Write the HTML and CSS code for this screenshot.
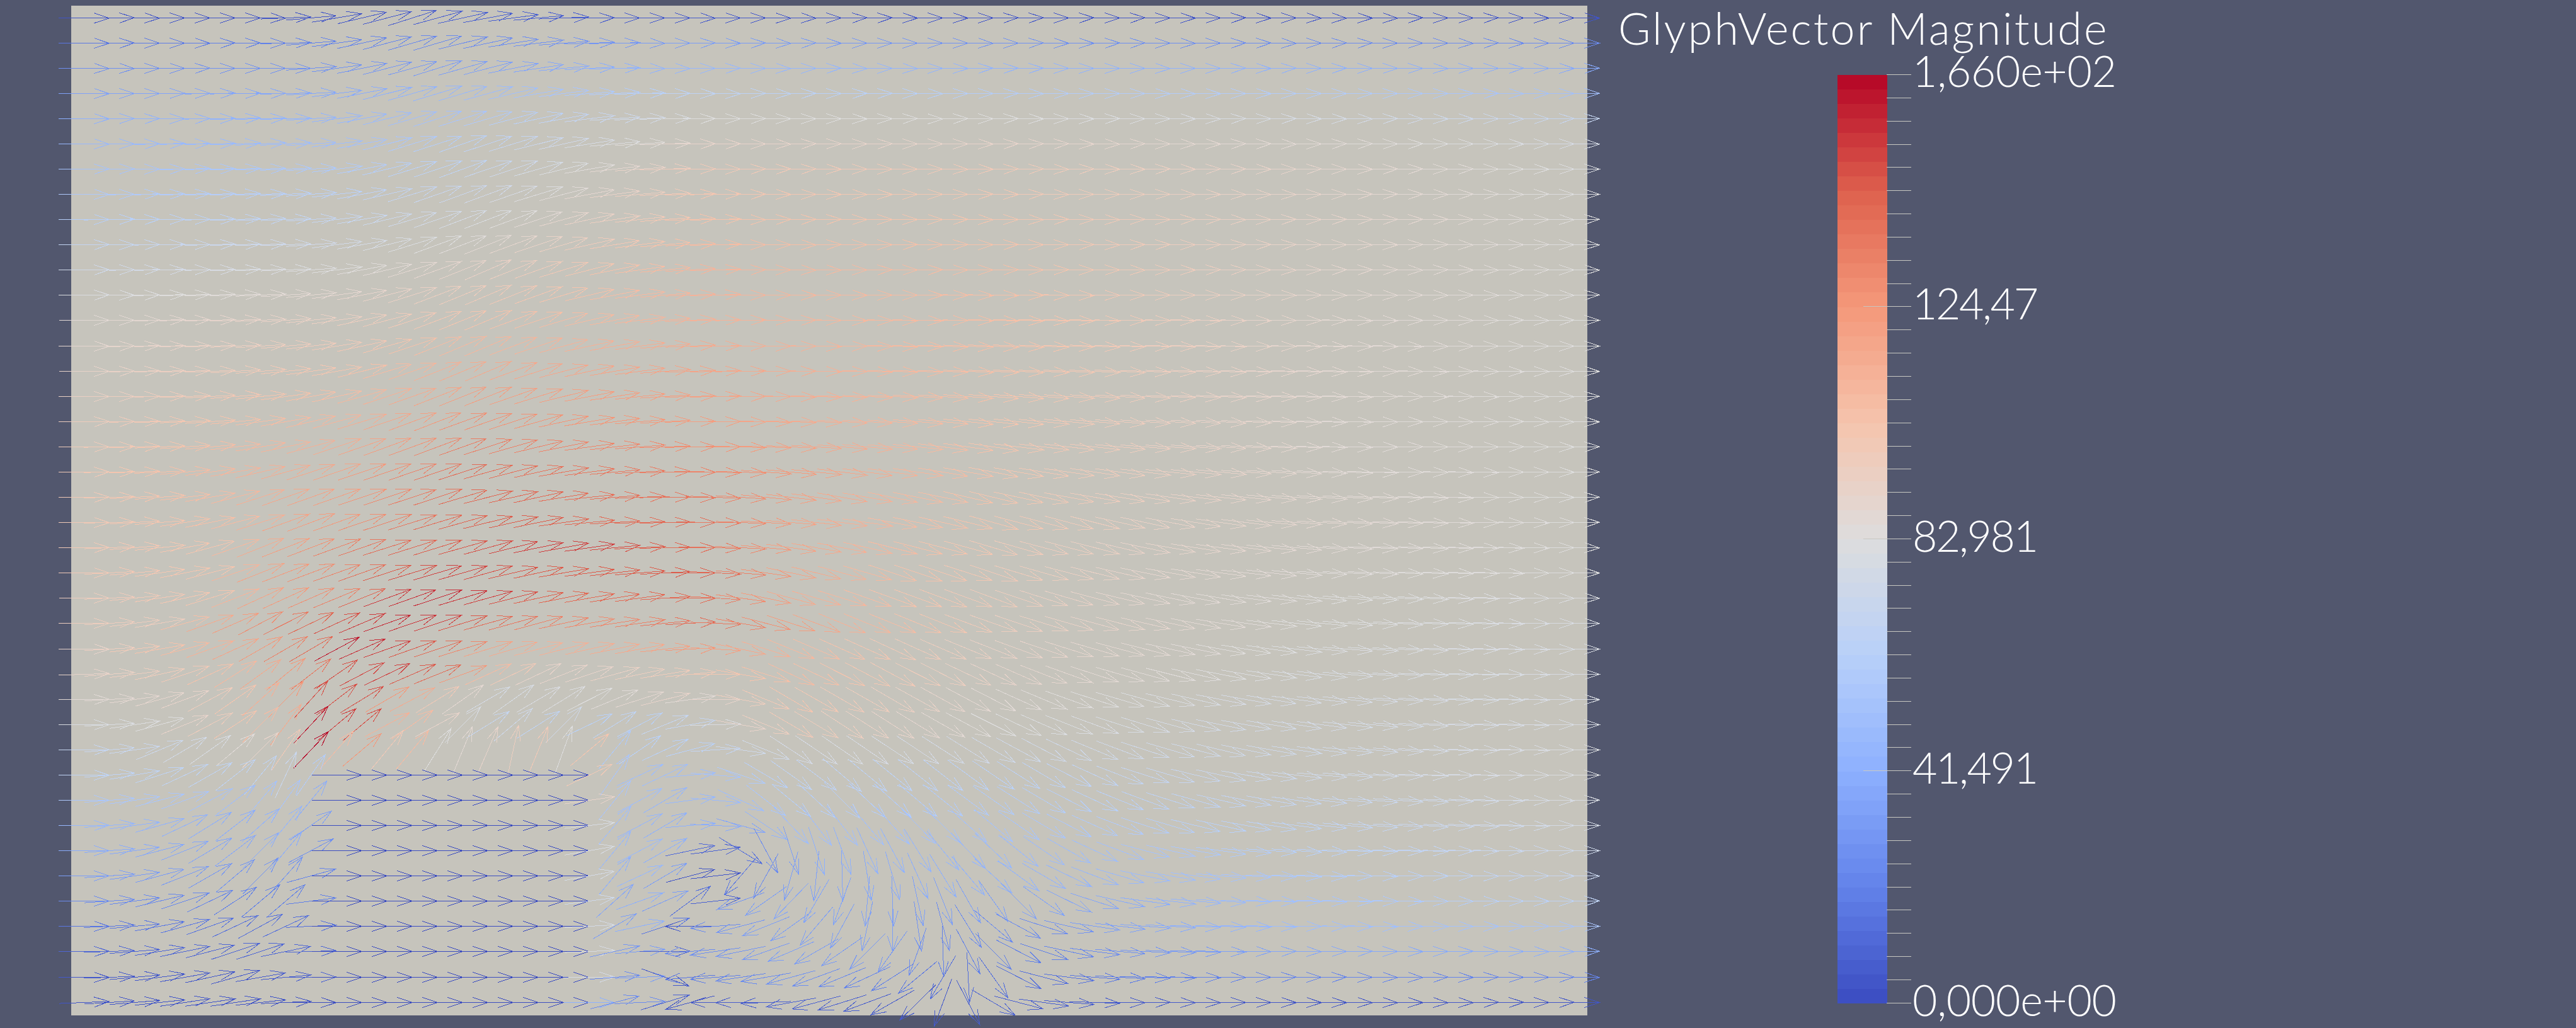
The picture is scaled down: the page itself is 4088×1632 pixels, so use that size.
FILE: index.html
```html
<!DOCTYPE html>
<html lang="en">
<head>
<meta charset="utf-8">
<title>GlyphVector Magnitude</title>
<link rel="stylesheet" href="styles.css">
</head>
<body>
<main class="view">
  <section class="plot"><svg id="glyphs" class="glyphs" width="2406" height="1603" viewBox="0 0 2406 1603"></svg></section>
  <aside class="legend">
    <h1 class="legend-title">GlyphVector Magnitude</h1>
    <div class="scale">
      <div id="bar" class="bar"></div>
      <div id="ticks" class="ticks"></div>
      <div class="labels">
        <span class="label label-long">1,660e+02</span>
        <span class="label label-short">124,47</span>
        <span class="label label-short">82,981</span>
        <span class="label label-short">41,491</span>
        <span class="label label-long">0,000e+00</span>
      </div>
    </div>
  </aside>
</main>
<script src="script.js"></script>
</body>
</html>
```
FILE: styles.css
```css
html, body { margin: 0; padding: 0; }
body { width: 4088px; height: 1632px; overflow: hidden; background: #52576e; }
.view { display: flex; align-items: flex-start; padding: 9px 0 0 113px; }
.plot { flex: none; width: 2406px; height: 1603px; background: #c6c4bc; }
.glyphs { display: block; overflow: visible; shape-rendering: crispEdges; }
.glyphs path { fill: none; stroke-width: 1; }
.legend { flex: none; margin-left: 49px; margin-top: -9px; display: flex; flex-direction: column; font-family: "Lato", sans-serif; font-weight: 300; color: #fff; }
.legend-title { margin: 0; padding-top: 9px; height: 70px; font-size: 70px; line-height: 70px; letter-spacing: 3.1px; font-weight: 300; white-space: nowrap; }
.scale { display: flex; margin-left: 348px; margin-top: 39px; height: 1475px; }
.bar { flex: none; width: 79px; height: 1474px; margin-top: 1px; display: flex; flex-direction: column; }
.band { flex: 1 1 0; }
.ticks { flex: none; width: 39px; height: 1475px; margin-left: -1px; display: flex; flex-direction: column; justify-content: space-between; align-items: flex-end; }
.tick { width: 39px; height: 1px; background: #c8c8c2; }
.tick-major { width: 76px; }
.labels { flex: none; margin-left: 2px; margin-top: -31px; height: 1525px; display: flex; flex-direction: column; justify-content: space-between; }
.label { display: block; font-size: 68px; line-height: 50px; white-space: nowrap; }
.label-long { letter-spacing: -0.3px; }
.label-short { letter-spacing: -2.4px; }
```
FILE: script.js
```js
var STOPS = [[0,59,76,192],[.125,98,130,234],[.25,141,176,254],[.375,184,208,249],[.5,221,221,221],[.625,245,196,173],[.75,244,152,122],[.875,222,96,77],[1,180,4,38]];
function color(m) {
  m = Math.max(0, Math.min(1, m));
  for (var k = 1; k < STOPS.length; k++) {
    if (m <= STOPS[k][0]) {
      var a = STOPS[k - 1], b = STOPS[k], t = (m - a[0]) / (b[0] - a[0]);
      return "rgb(" + Math.round(a[1] + (b[1] - a[1]) * t) + "," + Math.round(a[2] + (b[2] - a[2]) * t) + "," + Math.round(a[3] + (b[3] - a[3]) * t) + ")";
    }
  }
  return "rgb(180,4,38)";
}

/* Flow direction (degrees, up is positive): row -> "column:angle ..." */
var ANGLE = {
  0: "0:0 7:0 9:5 11:13 13:17 14:15 16:10 18:5 20:0 59:0",
  2: "0:0 8:0 10:8 12:14 14:17 16:14 18:8 20:3 22:0 59:0",
  5: "0:0 9:3 11:10 13:17 15:19 17:17 19:12 21:5 24:0 59:0",
  10: "0:0 8:2 10:7 12:13 14:20 16:23 18:20 20:14 22:8 24:3 26:0 59:0",
  14: "0:0 5:2 8:6 10:10 12:17 14:22 16:23 18:18 20:12 22:7 24:2 28:0 36:-3 59:0",
  17: "0:0 3:2 6:6 8:12 10:18 12:20 14:20 16:18 18:14 20:8 22:4 24:1 28:-3 36:-8 44:-4 52:0 59:0",
  19: "0:0 3:4 5:10 7:18 9:20 12:18 14:18 16:14 18:12 20:6 22:2 24:-1 30:-10 36:-13 44:-7 52:-2 59:0",
  20: "0:0 3:5 6:15 8:20 10:20 12:18 14:17 16:14 18:12 20:5 22:2 24:0 28:-5 32:-10 36:-15 40:-14 45:-8 49:-3 59:0",
  21: "0:0 3:6 5:15 7:22 10:20 12:18 14:17 16:15 18:12 20:8 22:3 24:0 26:-3 28:-8 32:-14 36:-16 40:-14 45:-8 50:-3 59:0",
  22: "0:0 3:8 5:15 7:22 10:20 12:18 14:17 16:15 18:12 20:8 22:5 24:0 26:-5 28:-12 32:-18 36:-18 40:-14 45:-8 50:-3 59:0",
  23: "0:0 3:8 5:17 7:25 10:23 12:20 14:18 16:16 18:12 20:10 22:8 24:0 26:-8 28:-15 32:-20 36:-20 40:-15 46:-8 52:-3 59:0",
  24: "0:0 3:10 5:20 7:28 10:25 12:20 14:18 16:15 18:15 20:10 22:8 24:3 25:-2 26:-10 28:-18 30:-22 34:-22 40:-15 46:-8 52:-3 59:0",
  25: "0:0 3:10 5:20 7:30 9:30 10:28 12:20 14:18 16:17 18:15 20:13 22:10 24:3 25:-3 26:-12 28:-22 32:-25 36:-22 40:-16 46:-9 52:-3 59:0",
  26: "0:2 2:7 4:18 6:32 8:40 10:35 11:28 12:25 14:22 15:20 16:25 18:25 20:18 22:12 24:5 25:0 26:-10 28:-25 32:-28 36:-25 40:-18 46:-10 52:-3 59:0",
  27: "0:0 1:3 2:8 3:15 4:20 5:28 6:35 7:42 8:45 9:48 10:38 11:32 12:30 13:28 14:32 15:35 16:30 17:35 18:30 19:32 20:27 21:22 22:18 23:14 24:8 25:0 26:-10 27:-22 28:-30 32:-30 36:-27 40:-18 46:-10 52:-4 59:0",
  28: "0:0 1:3 2:8 3:15 4:22 5:28 6:33 7:45 8:53 9:47 10:40 11:40 12:28 13:35 14:28 15:45 16:32 17:40 18:32 19:45 20:25 21:32 22:28 23:22 24:10 25:2 26:-10 27:-22 28:-30 30:-33 32:-32 36:-27 40:-20 46:-10 52:-4 59:0",
  29: "0:0 1:5 2:8 3:22 4:30 5:35 6:40 7:45 8:55 9:47 10:48 11:40 12:50 13:50 14:58 15:68 16:67 17:78 18:68 19:70 20:40 21:50 22:35 23:25 24:15 25:3 26:-8 27:-22 28:-33 30:-35 34:-33 38:-27 42:-18 48:-8 54:-2 59:0",
  30: "0:0 1:5 2:10 3:18 4:25 5:30 6:38 7:50 8:65 9:55 20:25 21:55 22:25 23:25 24:5 25:-5 26:-18 27:-30 28:-35 29:-37 30:-40 34:-38 38:-30 42:-18 46:-10 49:-5 54:-1 59:0",
  31: "0:0 2:8 4:20 5:28 6:38 7:50 8:55 9:50 20:8 21:50 22:28 23:30 24:8 25:-5 26:-25 27:-38 28:-40 29:-43 30:-45 36:-35 42:-20 46:-11 50:-5 59:0",
  32: "0:0 2:8 3:15 4:25 6:38 7:42 8:50 9:35 20:7 21:50 22:28 23:30 24:5 25:-3 26:-16 27:-34 28:-47 29:-52 30:-52 36:-40 38:-30 42:-18 46:-10 50:-5 59:0",
  33: "0:0 2:8 4:22 5:30 6:37 7:45 8:50 9:28 20:10 21:50 22:28 23:30 24:12 25:8 26:-31 27:-62 28:-72 29:-72 30:-70 31:-65 32:-62 33:-58 34:-50 36:-43 38:-35 42:-15 46:-5 50:-2 59:0",
  34: "0:0 2:8 4:22 5:30 6:40 7:45 8:48 9:15 20:10 21:50 22:25 23:30 24:15 25:7 26:-131 27:-119 28:-106 29:-96 30:-88 31:-81 32:-74 33:-66 34:-58 35:-50 36:-42 38:-30 42:-12 46:-3 50:-1 59:0",
  35: "0:0 2:8 4:18 6:33 7:40 8:40 9:7 20:8 21:42 22:20 23:24 24:36 25:6 26:-160 27:-145 28:-134 29:-120 30:-110 31:-95 32:-88 33:-78 34:-68 35:-60 36:-55 38:-35 40:-18 42:-8 46:-2 59:0",
  36: "0:0 2:5 4:15 6:25 7:28 8:25 9:3 20:3 21:30 22:12 23:18 24:-180 25:-175 26:-165 27:-158 28:-145 29:-130 30:-118 31:-102 32:-90 33:-82 34:-75 35:-58 36:-40 37:-28 38:-18 40:-9 42:-4 46:-1 59:0",
  37: "0:0 2:5 4:12 6:18 7:18 8:12 9:2 20:2 21:12 22:5 23:0 24:-175 25:-172 26:-168 27:-160 28:-157 29:-150 30:-145 31:-135 32:-125 33:-110 34:-88 35:-62 36:-45 37:-27 38:-18 39:-12 40:-7 42:-3 46:0 59:0",
  38: "0:0 2:5 4:10 6:15 7:10 8:5 9:1 20:1 21:5 22:3 23:-20 24:-175 25:-175 26:-172 27:-170 28:-165 29:-160 30:-158 31:-155 32:-147 33:-140 34:-120 35:-87 36:-55 37:-27 38:-15 39:-8 40:-5 42:-2 46:0 59:0",
  39: "0:2 2:5 4:8 6:8 7:6 8:3 9:0 20:0 21:15 22:3 23:17 24:-165 25:-180 26:-180 27:-178 28:-170 29:-165 30:-163 31:-160 32:-150 33:-135 34:-110 35:-62 36:-30 37:-15 38:-8 39:-5 40:-2 42:0 59:0"
};

/* Normalised magnitude: row -> "column:value ..." */
function topRow(a) {
  var k = [0, 10, 15, 24, 36, 49, 59];
  return k.map(function (c, n) { return c + ":" + a[n]; }).join(" ");
}
var MAG = {
  0: topRow([.02,.02,.05,.03,.02,.02,.02]),
  1: topRow([.1,.13,.15,.2,.17,.15,.15]),
  2: topRow([.16,.17,.2,.28,.26,.25,.23]),
  3: topRow([.21,.23,.28,.4,.36,.36,.31]),
  4: topRow([.25,.27,.33,.5,.5,.47,.42]),
  5: topRow([.28,.3,.38,.55,.55,.52,.47]),
  6: topRow([.32,.35,.4,.6,.6,.54,.49]),
  8: topRow([.37,.42,.47,.63,.62,.55,.5]),
  10: topRow([.45,.5,.55,.67,.64,.54,.5]),
  12: topRow([.52,.57,.62,.68,.64,.53,.5]),
  14: topRow([.55,.62,.7,.72,.63,.53,.5]),
  16: topRow([.58,.67,.77,.74,.62,.52,.5]),
  18: topRow([.6,.72,.85,.8,.62,.52,.5]),
  20: "0:.6 3:.62 6:.65 8:.72 10:.75 12:.8 14:.85 16:.88 18:.88 20:.85 24:.85 28:.72 32:.65 36:.62 42:.56 49:.53 59:.5",
  21: "0:.6 5:.62 7:.7 10:.8 12:.85 14:.88 16:.9 18:.92 20:.92 22:.88 24:.85 28:.72 32:.65 36:.6 42:.55 49:.52 59:.5",
  22: "0:.6 5:.62 7:.72 10:.8 12:.88 14:.92 16:.9 18:.88 20:.88 22:.88 24:.88 28:.72 32:.64 36:.6 42:.54 49:.51 59:.5",
  23: "0:.58 5:.62 7:.72 10:.8 12:.93 14:.95 16:.92 18:.87 20:.85 24:.85 28:.7 32:.63 36:.59 42:.53 49:.5 59:.49",
  24: "0:.58 3:.58 5:.7 7:.78 10:.9 12:.95 14:.92 16:.85 18:.8 20:.78 22:.8 24:.85 30:.68 36:.58 48:.5 59:.48",
  25: "0:.55 5:.68 7:.75 9:.85 10:.97 12:.92 14:.85 16:.72 18:.68 22:.7 24:.75 28:.66 32:.6 36:.56 48:.49 59:.48",
  26: "0:.55 4:.6 6:.66 8:.75 10:.9 12:.92 14:.85 15:.75 16:.65 18:.55 20:.55 24:.6 28:.65 32:.6 36:.55 48:.48 59:.48",
  27: "0:.52 4:.55 6:.62 8:.75 9:.9 10:.9 11:.9 12:.75 13:.7 14:.6 15:.53 16:.47 20:.5 23:.55 24:.52 26:.58 28:.62 32:.57 36:.52 46:.47 59:.48",
  28: "0:.48 3:.5 4:.55 6:.62 7:.65 8:.7 9:.98 10:.92 11:.9 12:.68 13:.65 14:.55 15:.48 16:.42 17:.45 18:.4 19:.45 20:.38 21:.4 22:.38 23:.42 24:.42 26:.55 28:.6 32:.55 36:.5 45:.46 59:.48",
  29: "0:.42 3:.44 5:.48 7:.55 8:.6 9:1 10:.65 11:.75 12:.6 13:.65 14:.5 18:.6 19:.5 20:.62 21:.35 22:.38 23:.38 24:.38 26:.45 30:.48 36:.45 48:.45 59:.49",
  30: "0:.4 4:.4 7:.4 8:.43 9:.36 20:.6 21:.33 22:.3 24:.3 28:.4 36:.38 48:.45 59:.49",
  31: "0:.34 4:.33 6:.3 7:.32 8:.33 9:.24 20:.55 21:.33 22:.3 23:.27 24:.28 26:.3 28:.37 36:.35 48:.42 59:.48",
  32: "0:.28 4:.25 6:.24 8:.27 9:.2 20:.48 21:.3 22:.27 23:.25 24:.25 26:.22 28:.3 36:.32 48:.4 59:.47",
  33: "0:.24 5:.22 8:.24 9:.16 20:.48 21:.28 22:.28 23:.25 24:.07 25:.05 26:.08 27:.15 28:.2 29:.25 34:.27 40:.3 48:.38 59:.45",
  34: "0:.2 4:.19 6:.17 8:.17 9:.13 20:.47 21:.25 22:.28 23:.2 24:.02 25:.02 26:.1 27:.15 28:.2 30:.22 34:.25 40:.27 48:.35 59:.43",
  35: "0:.15 4:.14 6:.12 8:.12 9:.12 20:.45 21:.22 22:.25 23:.2 24:.08 25:.05 26:.18 28:.22 34:.2 40:.22 48:.32 59:.4",
  36: "0:.1 4:.1 6:.08 8:.08 9:.08 20:.47 21:.2 22:.25 23:.1 24:.03 25:.15 26:.18 27:.2 32:.2 34:.15 38:.15 40:.2 48:.3 59:.33",
  37: "0:.06 4:.06 6:.06 8:.06 9:.06 20:.48 21:.18 22:.2 23:.05 24:.15 28:.2 32:.18 34:.12 38:.12 42:.18 48:.22 59:.25",
  38: "0:.03 6:.03 8:.04 9:.05 20:.47 21:.15 22:.2 23:.03 24:.1 28:.17 32:.12 34:.08 38:.08 42:.12 48:.13 59:.13",
  39: "0:.02 6:.02 9:.01 20:.25 21:.15 22:.15 23:.05 24:.02 28:.05 34:.03 36:.05 42:.03 48:.02 59:.02"
};

function parseTable(t) {
  var out = {};
  Object.keys(t).forEach(function (k) {
    out[k] = t[k].split(" ").map(function (s) { var p = s.split(":"); return [+p[0], +p[1]]; });
  });
  return out;
}
function atCol(knots, i) {
  if (i <= knots[0][0]) return knots[0][1];
  for (var k = 1; k < knots.length; k++) {
    if (i <= knots[k][0]) {
      var a = knots[k - 1], b = knots[k];
      return a[1] + (b[1] - a[1]) * (i - a[0]) / (b[0] - a[0]);
    }
  }
  return knots[knots.length - 1][1];
}
function sample(table, i, j) {
  if (table[j]) return atCol(table[j], i);
  var lo = j, hi = j;
  while (!table[lo]) lo--;
  while (!table[hi]) hi++;
  return atCol(table[lo], i) + (atCol(table[hi], i) - atCol(table[lo], i)) * (j - lo) / (hi - lo);
}
function wobble(i, j) {
  var s = Math.sin(i * 12.9898 + j * 78.233) * 43758.5453;
  return (s - Math.floor(s) - 0.5) * 1.1;
}

var angleT = parseTable(ANGLE), magT = parseTable(MAG);
var NS = "http://www.w3.org/2000/svg";
var svg = document.getElementById("glyphs");
var frag = document.createDocumentFragment();
function f(v) { return v.toFixed(1); }
for (var j = 0; j < 40; j++) {
  for (var i = 0; i < 60; i++) {
    var solid = i >= 10 && i <= 19 && j >= 30;
    var ang = solid ? 0 : sample(angleT, i, j) + wobble(i, j);
    var mag = solid ? 0 : sample(magT, i, j);
    var th = ang * Math.PI / 180;
    var dx = Math.cos(th), dy = -Math.sin(th);
    var cx = Math.floor(40.1 * i + 20) + 0.5;
    var cy = Math.floor(19 + 40.08 * j) + 0.5;
    var tx = cx + 40 * dx, ty = cy + 40 * dy;
    var d = "M" + f(cx - 40 * dx) + " " + f(cy - 40 * dy) + "L" + f(tx) + " " + f(ty) +
      "M" + f(tx - 24 * dx - 8 * dy) + " " + f(ty - 24 * dy + 8 * dx) + "L" + f(tx) + " " + f(ty) +
      "L" + f(tx - 24 * dx + 8 * dy) + " " + f(ty - 24 * dy - 8 * dx);
    var p = document.createElementNS(NS, "path");
    p.setAttribute("d", d);
    p.setAttribute("stroke", color(mag));
    frag.appendChild(p);
  }
}
svg.appendChild(frag);

var bar = document.getElementById("bar");
for (var b = 63; b >= 0; b--) {
  var band = document.createElement("div");
  band.className = "band";
  band.style.background = color((b + 0.5) / 64);
  bar.appendChild(band);
}
var ticks = document.getElementById("ticks");
for (var n = 0; n <= 40; n++) {
  var tick = document.createElement("div");
  tick.className = n === 10 || n === 20 || n === 30 ? "tick tick-major" : "tick";
  ticks.appendChild(tick);
}
```
